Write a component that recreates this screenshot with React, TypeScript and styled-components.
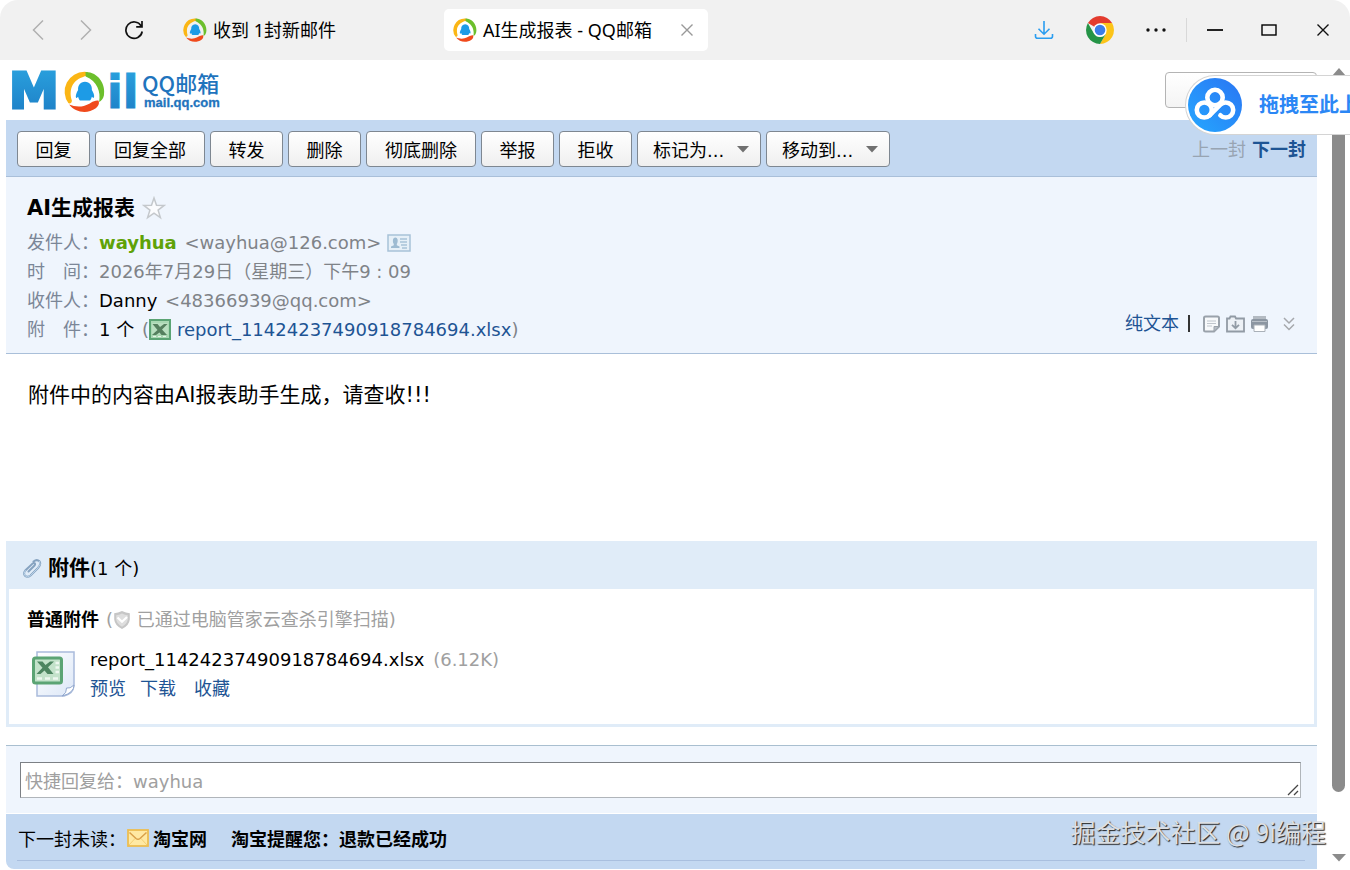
import React from "react";
import styled, { createGlobalStyle } from "styled-components";

const mailFont = '"DejaVu Sans", "Noto Sans CJK SC", sans-serif';
const uiFont = '"Noto Sans", "Noto Sans CJK SC", sans-serif';

const GlobalStyle = createGlobalStyle`
  * { box-sizing: border-box; }
  body {
    margin: 0;
    background: #fff;
    color: #000;
    font-family: ${mailFont};
    font-size: 18px;
    line-height: 29px;
    overflow: hidden;
  }
  button, input, textarea, select { font: inherit; color: inherit; margin: 0; }
  h1, h2, h3, p, dl, dd { margin: 0; font-weight: inherit; font-size: inherit; }
  svg { display: block; flex: none; }
`;

const Window = styled.div`
  position: relative;
  min-height: 100vh;
  display: flex;
  flex-direction: column;
  overflow: hidden;
`;

/* ---------- browser chrome ---------- */

const TitleBar = styled.header`
  display: flex;
  align-items: center;
  height: 60px;
  padding-left: 14px;
  background: #f1f1f1;
  border-radius: 18px 18px 0 0;
  font-family: ${uiFont};
`;

const BarButton = styled.button<{ $width: number }>`
  display: flex;
  align-items: center;
  justify-content: center;
  width: ${(p) => p.$width}px;
  height: 60px;
  padding: 0;
  border: 0;
  background: none;
`;

const TabStrip = styled.nav`
  display: flex;
  flex: 1;
  gap: 6px;
  margin-left: 16px;
`;

const Tab = styled.div<{ $active?: boolean }>`
  display: flex;
  align-items: center;
  width: 264px;
  height: 42px;
  padding: 0 9px;
  gap: 6px;
  border-radius: 5px;
  background: ${(p) => (p.$active ? "#fff" : "transparent")};
`;

const TabTitle = styled.span`
  flex: 1;
  white-space: nowrap;
`;

const TabClose = styled.button`
  display: flex;
  padding: 6px;
  border: 0;
  background: none;
`;

const BarDivider = styled.span`
  width: 1px;
  height: 24px;
  margin: 0 1px 0 2px;
  background: #d8d8d8;
`;

/* ---------- page frame ---------- */

const Viewport = styled.div`
  display: flex;
  flex: 1;
`;

const Page = styled.main`
  flex: 1;
  min-width: 0;
  margin-left: 6px;
  display: flex;
  flex-direction: column;
`;

const ScrollTrack = styled.div`
  display: flex;
  flex-direction: column;
  align-items: center;
  width: 33px;
  padding: 8px 0 8px 10px;
`;

const ScrollThumb = styled.div`
  flex: 712;
  width: 13px;
  margin-top: 6px;
  border-radius: 7px;
  background: #8b8b8b;
`;

const ScrollRest = styled.div`
  flex: 62;
`;

const Brand = styled.div`
  display: flex;
  align-items: center;
  justify-content: space-between;
  height: 60px;
  padding-left: 4px;
`;

const SearchBox = styled.input`
  width: 152px;
  height: 36px;
  border: 1px solid #b4b4b4;
  border-radius: 4px;
  background: linear-gradient(#fff, #f4f4f4);
`;

/* ---------- toolbar ---------- */

const Toolbar = styled.div`
  display: flex;
  align-items: center;
  height: 57px;
  padding: 2px 11px 0;
  gap: 5px;
  background: #c3d8f1;
  border-bottom: 1px solid #a9bfd9;
`;

const ToolButton = styled.button<{ $wide?: boolean }>`
  width: ${(p) => (p.$wide ? 110 : 73)}px;
  height: 36px;
  padding: 2px 0 0;
  border: 1px solid #7e8791;
  border-radius: 4px;
  background: linear-gradient(#fff, #efefef);
  white-space: nowrap;
`;

const SelectWrap = styled.div`
  display: grid;
  align-items: center;
  justify-items: end;
  > * { grid-area: 1 / 1; }
  > svg { margin-right: 12px; pointer-events: none; }
`;

const ToolSelect = styled.select`
  appearance: none;
  width: 124px;
  height: 36px;
  padding: 2px 0 0 15px;
  border: 1px solid #7e8791;
  border-radius: 4px;
  background: linear-gradient(#fff, #efefef);
`;

const Pager = styled.div`
  display: flex;
  gap: 6px;
  margin-left: auto;
`;

const PagerText = styled.span`
  color: #98a4b2;
`;

const Link = styled.a<{ $bold?: boolean }>`
  color: #1e5494;
  font-weight: ${(p) => (p.$bold ? 700 : 400)};
  text-decoration: none;
`;

/* ---------- message ---------- */

const Meta = styled.section`
  display: flex;
  justify-content: space-between;
  align-items: flex-end;
  padding: 16px 22px 9px 21px;
  background: #eff5fd;
  border-bottom: 1px solid #a9bfd9;
`;

const Subject = styled.h1`
  display: flex;
  align-items: center;
  gap: 7px;
  margin-bottom: 5px;
  font-size: 21px;
  line-height: 30px;
  font-weight: 700;
`;

const Field = styled.div`
  display: flex;
  align-items: center;
  height: 29px;
  white-space: pre;
  color: #7f8388;
`;

const Label = styled.span`
  width: 72px;
  color: #7b8697;
`;

const Sender = styled.strong`
  margin-right: 2px;
  color: #5fa207;
`;

const Dark = styled.span`
  margin-right: 2px;
  color: #000;
`;

const Gap = styled.span`
  width: 6px;
`;

const MetaTools = styled.div`
  display: flex;
  align-items: center;
  height: 29px;
  margin-bottom: 6px;
`;

const Pipe = styled.span`
  width: 2px;
  height: 17px;
  margin: 0 12px 0 9px;
  background: #333;
`;

const IconButton = styled.button`
  display: flex;
  padding: 0;
  margin-right: 5px;
  border: 0;
  background: none;
  &:last-child { margin: 0 0 0 9px; }
`;

const Body = styled.article`
  min-height: 187px;
  padding: 27px 22px;
  font-size: 21px;
`;

/* ---------- attachments ---------- */

const Attachments = styled.section`
  border: 3px solid #e0ecf8;
  border-top: 0;
`;

const AttachHead = styled.h2`
  display: flex;
  align-items: center;
  height: 48px;
  padding: 6px 16px 0;
  background: #e0ecf8;
`;

const AttachTitle = styled.strong`
  margin-left: 6px;
  font-size: 21px;
`;

const AttachBody = styled.div`
  padding: 16px 18px 21px;
`;

const GroupTitle = styled.h3`
  display: flex;
  align-items: center;
  color: #a0a0a0;
`;

const GroupName = styled.strong`
  margin-right: 7px;
  color: #000;
`;

const FileRow = styled.div`
  display: flex;
  align-items: center;
  margin-top: 11px;
  padding-left: 5px;
  gap: 14px;
`;

const FileSize = styled.span`
  margin-left: 3px;
  color: #a0a0a0;
`;

const FileLinks = styled.p`
  display: flex;
  gap: 14px;
  > :last-child { margin-left: 4px; }
`;

/* ---------- footer ---------- */

const Reply = styled.section`
  display: flex;
  margin-top: 18px;
  padding: 16px 16px 15px 14px;
  background: #eff5fd;
  border-top: 1px solid #a9bfd0;
  border-bottom: 1px solid #fff;
`;

const ReplyField = styled.label`
  display: grid;
  flex: 1;
  align-items: end;
  justify-items: end;
  > * { grid-area: 1 / 1; }
  > svg { margin: 0 2px 2px 0; pointer-events: none; }
`;

const ReplyBox = styled.textarea`
  display: block;
  width: 100%;
  height: 36px;
  padding: 4px 4px 0;
  border: 1px solid #b0b5ba;
  border-top-color: #7c8085;
  border-left-color: #7c8085;
  background: #fff;
  resize: none;
  overflow: hidden;
  &::placeholder { color: #a0a0a0; opacity: 1; }
`;

const NextUnread = styled.footer`
  padding: 11px 12px 8px 11px;
  background: #c3d8f1;
  border-radius: 0 0 0 8px;
`;

const NextRow = styled.div`
  display: flex;
  align-items: center;
  height: 36px;
  padding: 0 1px 7px;
  border-bottom: 1px solid #a9bfdf;
`;

const NextLink = styled.a`
  margin-right: 24px;
  color: #000;
  font-weight: 700;
  text-decoration: none;
`;

const MailIcon = styled.span`
  margin: 0 4px 3px 1px;
`;

/* ---------- things floating over the page ---------- */

const DropPill = styled.div`
  position: absolute;
  top: 75px;
  right: 0;
  display: flex;
  align-items: center;
  width: 165px;
  height: 60px;
  padding-left: 2px;
  gap: 17px;
  overflow: hidden;
  border: 1px solid #d4d4d4;
  border-right: 0;
  border-radius: 30px 0 0 30px;
  background: #fff;
  color: #2b87f5;
  font-size: 20px;
  font-weight: 700;
  white-space: nowrap;
`;

const Watermark = styled.div`
  position: absolute;
  right: 24px;
  bottom: 21px;
  font-family: "Noto Sans CJK SC", sans-serif;
  font-size: 25px;
  line-height: 36px;
  color: #dcdfe3;
  text-shadow: 1px 1px 1px #222;
  white-space: nowrap;
`;

/* ---------- drawings ---------- */

const Ring = () => (
  <>
    <path d="M12 .5A11.5 11.5 0 0 0 2.6 18.800C4 19 4.500 18.300 4.600 17.300 2.400 10 5.500 4.500 13.500 2.800L14 .7Z" fill="#fbb615" />
    <path d="M12.500 .6C19.500 .4 24.500 7.500 23.200 14.200 22.800 16 21.700 17.500 20.400 18 21.500 12 19.400 6 12.600 3.200Z" fill="#6cbf2c" />
    <path d="M3 19.500C6.500 24.200 13.500 25.300 18.500 21.700 20.300 20.300 20.700 18.400 20 17.200 17 16.800 15 19.500 11.500 20.300 8.500 21 5.500 20.500 3 19.500Z" fill="#f04a1c" />
    <path d="M12.200 6.200C9.400 6.200 8 8.400 8.200 11 7.300 12.400 6.500 14.500 7 15.600 7.400 15.800 7.800 15.200 8.200 14.900 8.400 16 8.900 16.700 9.300 17.100H15.200C15.700 16.500 16 15.800 16.200 14.900 16.700 15.400 17.100 15.800 17.400 15.500 17.900 14.300 17.100 12.400 16.200 11 16.400 8.400 15 6.200 12.200 6.200Z" fill="#1d9be6" />
  </>
);

const Favicon = () => (
  <svg width="24" height="24" viewBox="0 0 24 24"><Ring /></svg>
);

const MailLogo = () => (
  <svg width="220" height="60" viewBox="0 -6 220 60" overflow="visible" role="img" aria-label="QQ邮箱">
    <defs>
      <linearGradient id="blue" x1="0" y1="0" x2="0" y2="1">
        <stop offset="0" stopColor="#2ba4e0" />
        <stop offset="1" stopColor="#1c7cc4" />
      </linearGradient>
    </defs>
    <g fill="url(#blue)" stroke="url(#blue)" strokeWidth="3" fontFamily="DejaVu Sans" fontWeight="700">
      <text x="-1" y="42" fontSize="50">M</text>
      <text x="97" y="42" fontSize="46" strokeWidth="1">il</text>
    </g>
    <g transform="translate(54 5) scale(1.720)">
      <circle cx="12" cy="12" r="11.500" fill="#fff" />
      <Ring />
    </g>
    <g fill="#1f74bd">
      <text x="132" y="26" fontFamily="Noto Sans CJK SC" fontWeight="500" fontSize="22">QQ邮箱</text>
      <text x="134" y="41" fontFamily="Liberation Sans" fontWeight="700" fontSize="13" stroke="#1f74bd" strokeWidth="0.300">mail.qq.com</text>
    </g>
  </svg>
);

const ChevronIcon = ({ right }: { right?: boolean }) => (
  <svg width="14" height="22" viewBox="0 0 14 22" fill="none" stroke="#b0b0b0" strokeWidth="1.500">
    <path d={right ? "M2 1.500 11.500 11 2 20.500" : "M12 1.500 2.500 11 12 20.500"} />
  </svg>
);

const ReloadIcon = () => (
  <svg width="20" height="20" viewBox="0 0 20 20" fill="none" stroke="#111" strokeWidth="1.700">
    <path d="M17.200 6A8.200 8.200 0 1 0 18.200 11.500M18 1V6.800H12.200" />
  </svg>
);

const DownloadIcon = () => (
  <svg width="20" height="20" viewBox="0 0 20 20" fill="none" stroke="#2a9df0" strokeWidth="1.600">
    <path d="M10 1V14M4.500 8.700 10 14.200 15.500 8.700M1.500 14V16.200Q1.500 18.200 3.500 18.200H16.500Q18.500 18.200 18.500 16.200V14" />
  </svg>
);

const ChromeIcon = () => (
  <svg width="28" height="28" viewBox="0 0 28 28">
    <path d="M14 14 1.900 7A14 14 0 0 1 26.100 7Z" fill="#e33b2e" />
    <path d="M14 7H26.100A14 14 0 0 1 14 28L20.100 17.500Z" fill="#fcc419" />
    <path d="M1.900 7 7.900 17.500A7 7 0 0 0 20.100 17.500L14 28A14 14 0 0 1 1.900 7Z" fill="#259447" />
    <circle cx="14" cy="14" r="6.700" fill="#fff" />
    <circle cx="14" cy="14" r="5.300" fill="#3b7de9" />
  </svg>
);

const DotsIcon = () => (
  <svg width="22" height="6" viewBox="0 0 22 6" fill="#111">
    <circle cx="3" cy="3" r="1.700" /><circle cx="11" cy="3" r="1.700" /><circle cx="19" cy="3" r="1.700" />
  </svg>
);

const MinIcon = () => (
  <svg width="16" height="2" viewBox="0 0 16 2"><rect width="16" height="2" fill="#222" /></svg>
);

const MaxIcon = () => (
  <svg width="16" height="12" viewBox="0 0 16 12"><rect x="1" y="1" width="14" height="10" fill="none" stroke="#000" strokeWidth="1.400" /></svg>
);

const CrossIcon = ({ color }: { color: string }) => (
  <svg width="12" height="12" viewBox="0 0 12 12" stroke={color} strokeWidth="1.400"><path d="M.5.5 11.500 11.500M11.500.5.5 11.500" /></svg>
);

const Caret = ({ up, color = "#707070", size = 12 }: { up?: boolean; color?: string; size?: number }) => (
  <svg width={size} height={size > 12 ? 8 : 7} viewBox="0 0 12 7" preserveAspectRatio="none"><path d={up ? "M0 7 6 0 12 7Z" : "M0 0 6 6.500 12 0Z"} fill={color} /></svg>
);

const StarIcon = () => (
  <svg width="24" height="24" viewBox="0 0 24 24" fill="#fbfcfe" stroke="#c4c8cc" strokeWidth="1.500">
    <path d="M12 2 14.500 9.300 22.300 9.400 16.100 14.100 18.400 21.600 12 17.100 5.600 21.600 7.900 14.100 1.700 9.400 9.500 9.300Z" />
  </svg>
);

const CardIcon = () => (
  <svg width="24" height="18" viewBox="0 0 24 18">
    <rect x="1" y="1" width="22" height="16" fill="#e6f0f8" stroke="#a8c2d8" strokeWidth="1.500" />
    <path d="M4 14V12.500L6.800 11.300V10C5.800 8.800 5.800 7 6 5.500Q6.500 3.500 8.300 3.500T10.600 5.500C10.800 7 10.700 8.800 9.800 10V11.300L12.500 12.500V14Z" fill="#9dbbd2" />
    <path d="M13 5H20M13 8H20M14 11H20M15 14H20" stroke="#a8c2d8" strokeWidth="1.400" />
  </svg>
);

const SheetIcon = () => (
  <svg width="22" height="21" viewBox="0 0 22 21">
    <rect x="1" y="1" width="20" height="19" fill="#a9d8b3" stroke="#5ba474" strokeWidth="2" />
    <path d="M3 4H19V15H3Z" fill="#b9dfc0" />
    <path d="M3.500 5H8.500L11 8 15 5H18.500L13 10.500 18 16H12.500L10.500 13.500 7 16H3L8.500 11Z" fill="#55805f" />
    <path d="M4 17.500H18" stroke="#e6f5e8" strokeDasharray="3 2" />
  </svg>
);

const NoteIcon = () => (
  <svg width="19" height="18" viewBox="0 0 19 18">
    <path d="M2 3Q2 1.500 3.500 1.500H15.500Q17 1.500 17 3V11.500L12 16.500H3.500Q2 16.500 2 15Z" fill="#f7f9fb" stroke="#9aa2ab" strokeWidth="2" />
    <path d="M17 11.500H12V16.500Z" fill="#b7bdc4" stroke="#9aa2ab" />
    <path d="M5 6H14M5 8.500H14M5 11H10" stroke="#c0c6cd" />
  </svg>
);

const ArchiveIcon = () => (
  <svg width="19" height="18" viewBox="0 0 19 18" fill="none" stroke="#929ba5" strokeWidth="1.800">
    <path d="M1 3.500H3.500L4.500 1.500H9L10 3.500H18V16.500H1Z" fill="#edf1f6" />
    <path d="M9.500 6V13M6 9.800 9.500 13.200 13 9.800" />
  </svg>
);

const PrintIcon = () => (
  <svg width="19" height="18" viewBox="0 0 19 18">
    <path d="M3 1H16V5H3Z" fill="#b3bac2" />
    <rect x="1" y="4" width="17" height="10" rx="2" fill="#8c96a2" />
    <path d="M2 6.500H17" stroke="#b9c0c8" />
    <path d="M4 10H15V16.500H4Z" fill="#fff" stroke="#aab1b9" />
  </svg>
);

const MoreIcon = () => (
  <svg width="12" height="14" viewBox="0 0 12 14" fill="none" stroke="#a5a8ac" strokeWidth="1.500">
    <path d="M1 1 6 6 11 1M1 7.500 6 12.500 11 7.500" />
  </svg>
);

const ClipIcon = () => (
  <svg width="20" height="21" viewBox="0 0 20 21" fill="none" strokeLinecap="round">
    <path d="M6.500 13.500 12.500 7.500Q13.700 6 12.500 5.200 11.500 4.600 10.500 5.600L3.300 12.500Q1 15.500 3 17.800 5.500 20 8.500 17.500L16 10Q19.500 6 17.500 3.300 14.800.8 11.500 3.500" stroke="#86a3c0" strokeWidth="2" />
    <path d="M3.300 12.500Q1 15.500 3 17.800 5.500 20 8.500 17.500L16 10Q19.500 6 17.500 3.300" stroke="#b9d3ea" />
  </svg>
);

const ShieldIcon = () => (
  <svg width="18" height="20" viewBox="0 0 18 20">
    <path d="M9 1Q5 3 1.200 3.200V9.500Q1.800 15.500 9 19 16.200 15.500 16.800 9.500V3.200Q13 3 9 1Z" fill="#c6c6c6" />
    <path d="M9 3.500Q6 5 3.200 5.200V9.500Q4 14 9 16.700 14 14 14.800 9.500V5.200Q12 5 9 3.500Z" fill="#dedede" />
    <path d="M4.500 7.500 9 11.800 14 7" fill="none" stroke="#fff" strokeWidth="2.200" />
  </svg>
);

const FileIcon = () => (
  <svg width="44" height="48" viewBox="0 0 44 48">
    <defs>
      <linearGradient id="paper" x1="0" y1="0" x2="1" y2="1">
        <stop offset="0" stopColor="#fff" /><stop offset="1" stopColor="#dce7f7" />
      </linearGradient>
    </defs>
    <path d="M5 2H42V36Q41 44 32 46H5Z" fill="url(#paper)" stroke="#a9bbdb" strokeWidth="1.500" />
    <path d="M30 46Q35 43 34.500 38 38 39 42 35 42 43 30 46Z" fill="#fff" stroke="#93a9cf" />
    <rect x="1.500" y="8" width="28" height="25" rx="2" fill="#c3e2ca" stroke="#5ba474" strokeWidth="3" />
    <path d="M5 11.500H10.500L13.500 15 18 11.500H22L16 17.200 21.500 24H15.500L12.500 20.500 8.500 24H4.500L10.500 17.800Z" fill="#4d8560" />
    <path d="M23.500 13H27M23.500 17.500H27M23.500 22H27M5 28.500H26" stroke="#eef8f0" strokeWidth="2.400" strokeDasharray="5 3" />
  </svg>
);

const EnvelopeIcon = () => (
  <svg width="22" height="18" viewBox="0 0 22 18">
    <rect x="1" y="1" width="20" height="16" fill="#ffe9a3" stroke="#edbd50" strokeWidth="1.800" />
    <path d="M2 16 8 9.500M20 16 14 9.500" stroke="#f3cf74" />
    <path d="M2.500 3.500 9 9.500Q11 11 13 9.500L19.500 3.500" fill="none" stroke="#d9a04a" strokeWidth="1.500" />
  </svg>
);

const GripIcon = () => (
  <svg width="12" height="12" viewBox="0 0 12 12" stroke="#444" strokeWidth="1.300"><path d="M1 11 11 1M7 11 11 7" /></svg>
);

const DiskIcon = () => (
  <svg width="54" height="54" viewBox="0 0 54 54">
    <defs>
      <linearGradient id="disk" x1="0" y1="1" x2="1" y2="0">
        <stop offset="0" stopColor="#25a7ff" /><stop offset="1" stopColor="#2a75f3" />
      </linearGradient>
    </defs>
    <circle cx="27" cy="27" r="27" fill="url(#disk)" />
    <g fill="none" stroke="#fff" strokeWidth="4.600" strokeLinecap="round">
      <circle cx="27" cy="19.500" r="7.700" />
      <circle cx="16.300" cy="32" r="7.500" />
      <path d="M21.600 37.300 32.400 26.700A7.500 7.500 0 1 1 32.400 37.300" />
    </g>
  </svg>
);

/* ---------- page ---------- */

const actions: { text: string; wide?: boolean }[] = [
  { text: "回复" },
  { text: "回复全部", wide: true },
  { text: "转发" },
  { text: "删除" },
  { text: "彻底删除", wide: true },
  { text: "举报" },
  { text: "拒收" },
];

const menus = ["标记为...", "移动到..."];
const fileName = "report_11424237490918784694.xlsx";

export default function App() {
  return (
    <Window>
      <GlobalStyle />
      <TitleBar>
        <BarButton $width={48} aria-label="后退"><ChevronIcon /></BarButton>
        <BarButton $width={48} aria-label="前进"><ChevronIcon right /></BarButton>
        <BarButton $width={48} aria-label="刷新"><ReloadIcon /></BarButton>
        <TabStrip>
          <Tab>
            <Favicon />
            <TabTitle>收到 1封新邮件</TabTitle>
          </Tab>
          <Tab $active>
            <Favicon />
            <TabTitle>AI生成报表 - QQ邮箱</TabTitle>
            <TabClose aria-label="关闭标签页"><CrossIcon color="#999" /></TabClose>
          </Tab>
        </TabStrip>
        <BarButton $width={56} aria-label="下载"><DownloadIcon /></BarButton>
        <BarButton $width={56} aria-label="Chrome"><ChromeIcon /></BarButton>
        <BarButton $width={56} aria-label="更多"><DotsIcon /></BarButton>
        <BarDivider />
        <BarButton $width={54} aria-label="最小化"><MinIcon /></BarButton>
        <BarButton $width={54} aria-label="最大化"><MaxIcon /></BarButton>
        <BarButton $width={54} aria-label="关闭"><CrossIcon color="#111" /></BarButton>
      </TitleBar>

      <Viewport>
        <Page>
          <Brand>
            <MailLogo />
            <SearchBox type="search" aria-label="搜索" />
          </Brand>

          <Toolbar>
            {actions.map((a) => (
              <ToolButton key={a.text} $wide={a.wide}>{a.text}</ToolButton>
            ))}
            {menus.map((m) => (
              <SelectWrap key={m}>
                <ToolSelect aria-label={m}><option>{m}</option></ToolSelect>
                <Caret />
              </SelectWrap>
            ))}
            <Pager>
              <PagerText>上一封</PagerText>
              <Link href="#next" $bold>下一封</Link>
            </Pager>
          </Toolbar>

          <Meta>
            <div>
              <Subject>AI生成报表<StarIcon /></Subject>
              <Field>
                <Label>发件人：</Label>
                <Sender>wayhua</Sender> &lt;wayhua@126.com&gt;<Gap /><CardIcon />
              </Field>
              <Field><Label>时　间：</Label>2026年7月29日（星期三）下午9 : 09</Field>
              <Field><Label>收件人：</Label><Dark>Danny</Dark> &lt;48366939@qq.com&gt;</Field>
              <Field>
                <Label>附　件：</Label><Dark>1 个</Dark> (<SheetIcon />
                <Gap /><Link href="#attachment">{fileName}</Link>)
              </Field>
            </div>
            <MetaTools>
              <Link href="#plain">纯文本</Link>
              <Pipe />
              <IconButton aria-label="记事"><NoteIcon /></IconButton>
              <IconButton aria-label="保存"><ArchiveIcon /></IconButton>
              <IconButton aria-label="打印"><PrintIcon /></IconButton>
              <IconButton aria-label="展开"><MoreIcon /></IconButton>
            </MetaTools>
          </Meta>

          <Body><p>附件中的内容由AI报表助手生成，请查收!!!</p></Body>

          <AttachHead><span><ClipIcon /></span><AttachTitle>附件</AttachTitle>(1 个)</AttachHead>
          <Attachments>
            <AttachBody>
              <GroupTitle>
                <GroupName>普通附件</GroupName>(<ShieldIcon />&nbsp;已通过电脑管家云查杀引擎扫描)
              </GroupTitle>
              <FileRow>
                <FileIcon />
                <div>
                  <p>{fileName} <FileSize>(6.12K)</FileSize></p>
                  <FileLinks>
                    <Link href="#preview">预览</Link>
                    <Link href="#download">下载</Link>
                    <Link href="#favorite">收藏</Link>
                  </FileLinks>
                </div>
              </FileRow>
            </AttachBody>
          </Attachments>

          <Reply>
            <ReplyField>
              <ReplyBox aria-label="快捷回复" placeholder="快捷回复给：wayhua" />
              <GripIcon />
            </ReplyField>
          </Reply>

          <NextUnread>
            <NextRow>
              下一封未读：<MailIcon><EnvelopeIcon /></MailIcon>
              <NextLink href="#sender">淘宝网</NextLink>
              <NextLink href="#unread">淘宝提醒您：退款已经成功</NextLink>
            </NextRow>
          </NextUnread>
        </Page>
        <ScrollTrack>
          <Caret up color="#8b8b8b" size={14} />
          <ScrollThumb />
          <ScrollRest />
          <Caret color="#8b8b8b" size={14} />
        </ScrollTrack>
      </Viewport>

      <DropPill><DiskIcon /><span>拖拽至此上</span></DropPill>
      <Watermark>掘金技术社区 @ 9i编程</Watermark>
    </Window>
  );
}
